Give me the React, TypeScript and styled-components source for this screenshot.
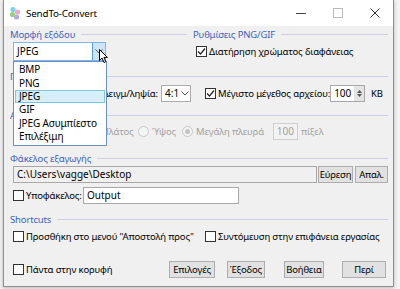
import React from 'react';
import styled, { createGlobalStyle } from 'styled-components';

const GlobalStyle = createGlobalStyle`
  html, body {
    margin: 0;
    padding: 0;
    background: #f4f4f4;
  }
  body {
    font-family: 'Noto Sans', 'DejaVu Sans', sans-serif;
    font-size: 9.5px;
    letter-spacing: -0.15px;
    line-height: 13px;
    color: #000;
  }
`;

const Page = styled.div`
  width: 400px;
  height: 289px;
  overflow: hidden;
  position: relative;
`;

const Window = styled.div`
  margin-left: 3px;
  width: 389px;
  height: 286px;
  border: 1px solid #8e8e8e;
  border-top: none;
  box-shadow: 0 1px 4px rgba(0, 0, 0, 0.25);
  background: #f0f0f0;
  display: flex;
  flex-direction: column;
  position: relative;
`;

const TitleBar = styled.div`
  height: 26px;
  background: #fff;
  display: flex;
  align-items: center;
  padding-left: 5px;
  flex-shrink: 0;
`;

const Title = styled.span`
  font-size: 9.8px;
  margin-left: 5px;
  flex: 1;
`;

const WinButton = styled.div`
  width: 37px;
  height: 26px;
  display: flex;
  align-items: center;
  justify-content: center;
`;

const Body = styled.div`
  padding: 0 5px 0 6px;
  display: flex;
  flex-direction: column;
  position: relative;
`;

const Columns = styled.div`
  display: flex;
  gap: 6px;
`;

const Column = styled.div<{ $w?: number }>`
  display: flex;
  flex-direction: column;
  width: ${p => (p.$w ? `${p.$w}px` : 'auto')};
  flex: ${p => (p.$w ? 'none' : 1)};
`;

const Header = styled.div<{ $top?: number }>`
  height: 14px;
  margin-top: ${p => p.$top ?? 0}px;
  display: flex;
  align-items: center;
  gap: 6px;
  color: #3b63c0;
  white-space: nowrap;
  &::after {
    content: '';
    flex: 1;
    height: 1px;
    background: #cacfe8;
  }
`;

const Row = styled.div<{ $h: number; $top?: number; $pl?: number }>`
  height: ${p => p.$h}px;
  margin-top: ${p => p.$top ?? 0}px;
  padding-left: ${p => p.$pl ?? 0}px;
  display: flex;
  align-items: center;
  white-space: nowrap;
`;

const Cell = styled.div<{ $w: number; $end?: boolean }>`
  width: ${p => p.$w}px;
  flex-shrink: 0;
  display: flex;
  align-items: center;
  justify-content: ${p => (p.$end ? 'flex-end' : 'flex-start')};
`;

const Combo = styled.div<{ $w: number; $ml?: number; $active?: boolean }>`
  width: ${p => p.$w}px;
  height: ${p => (p.$active ? 19 : 17)}px;
  margin-left: ${p => p.$ml ?? 0}px;
  box-sizing: border-box;
  border: 1px solid ${p => (p.$active ? '#7eb4ea' : '#acacac')};
  background: #fff;
  display: flex;
  align-items: center;
  padding-left: 3px;
  flex-shrink: 0;
  font-size: 10px;
  letter-spacing: 0;
`;

const ComboText = styled.span`
  flex: 1;
`;

const DropBtn = styled.div<{ $active?: boolean }>`
  width: 12px;
  align-self: stretch;
  display: flex;
  align-items: center;
  justify-content: center;
  background: ${p => (p.$active ? '#cce4f7' : 'transparent')};
  border-left: 1px solid ${p => (p.$active ? '#569de5' : 'transparent')};
`;

const Box = styled.span`
  width: 11px;
  height: 11px;
  box-sizing: border-box;
  border: 1px solid #333;
  background: #fff;
  display: inline-flex;
  align-items: center;
  justify-content: center;
  margin-right: 2px;
  flex-shrink: 0;
`;

const Radio = styled.span<{ $checked?: boolean }>`
  width: 11px;
  height: 11px;
  box-sizing: border-box;
  border: 1px solid #c8c8c8;
  border-radius: 50%;
  background: #f4f4f4;
  display: inline-flex;
  align-items: center;
  justify-content: center;
  margin-right: 3px;
  flex-shrink: 0;
  &::after {
    content: '';
    display: ${p => (p.$checked ? 'block' : 'none')};
    width: 5px;
    height: 5px;
    border-radius: 50%;
    background: #c4c4c4;
  }
`;

const Label = styled.span<{ $ml?: number; $muted?: boolean }>`
  margin-left: ${p => p.$ml ?? 0}px;
  color: ${p => (p.$muted ? '#a2a2a2' : '#000')};
  flex-shrink: 0;
`;

const TextBox = styled.div<{ $w: number; $ml?: number; $grey?: boolean; $muted?: boolean }>`
  width: ${p => p.$w}px;
  height: 17px;
  margin-left: ${p => p.$ml ?? 0}px;
  box-sizing: border-box;
  border: 1px solid ${p => (p.$muted ? '#d0d0d0' : '#a8a8a8')};
  background: ${p => (p.$grey ? '#f0f0f0' : p.$muted ? '#f2f2f2' : '#fff')};
  color: ${p => (p.$muted ? '#a2a2a2' : '#000')};
  display: flex;
  align-items: center;
  padding: 0 3px;
  justify-content: ${p => (p.$muted ? 'flex-end' : 'flex-start')};
  flex-shrink: 0;
  font-size: 10px;
  letter-spacing: 0;
`;

const Spin = styled.div`
  width: 35px;
  height: 17px;
  box-sizing: border-box;
  border: 1px solid #a8a8a8;
  background: #fff;
  display: flex;
  align-items: center;
  flex-shrink: 0;
  font-size: 10px;
`;

const SpinValue = styled.span`
  flex: 1;
  text-align: right;
  padding-right: 3px;
`;

const SpinArrows = styled.div`
  width: 10px;
  align-self: stretch;
  background: #e4e4e4;
  display: flex;
  flex-direction: column;
  align-items: center;
  justify-content: center;
  gap: 1px;
`;

const Button = styled.div<{ $w: number; $ml?: number }>`
  width: ${p => p.$w}px;
  height: 17px;
  margin-left: ${p => p.$ml ?? 0}px;
  box-sizing: border-box;
  border: 1px solid #adadad;
  background: #e1e1e1;
  display: flex;
  align-items: center;
  justify-content: center;
  flex-shrink: 0;
`;

const Spacer = styled.div`
  flex: 1;
`;

const DropList = styled.div`
  position: absolute;
  left: 9px;
  top: 61px;
  width: 94px;
  box-sizing: border-box;
  border: 1px solid #6f8fbf;
  background: #fff;
  padding: 1px 0 2px;
  z-index: 5;
  white-space: nowrap;
  font-size: 10px;
`;

const DropItem = styled.div<{ $selected?: boolean }>`
  height: 13.4px;
  display: flex;
  align-items: center;
  padding-left: 3px;
  margin: 0 1px;
  box-sizing: border-box;
  background: ${p => (p.$selected ? '#d6eef7' : 'transparent')};
  border: 1px solid ${p => (p.$selected ? '#7fc4e2' : 'transparent')};
`;

const Cursor = styled.svg`
  position: absolute;
  left: 95px;
  top: 49px;
  z-index: 6;
`;

const Check = () => (
  <svg width="9" height="9" viewBox="0 0 9 9">
    <path d="M1 4.5 L3.5 7 L8 1.5" fill="none" stroke="#222" strokeWidth="1.2" />
  </svg>
);

const Chevron = () => (
  <svg width="8" height="5" viewBox="0 0 8 5">
    <path d="M0.5 0.5 L4 4 L7.5 0.5" fill="none" stroke="#555" strokeWidth="1" />
  </svg>
);

const Logo = () => (
  <svg width="12" height="14" viewBox="0 0 12 14">
    <circle cx="4" cy="3.5" r="2.6" fill="#7ed1e8" />
    <circle cx="8.5" cy="6" r="2.6" fill="#f2a9c9" />
    <circle cx="3.5" cy="8.5" r="2.6" fill="#9ad27a" />
    <circle cx="7.5" cy="11" r="2.6" fill="#b7a8e6" />
  </svg>
);

const formats = ['BMP', 'PNG', 'JPEG', 'GIF', 'JPEG Ασυμπίεστο', 'Επιλέξιμη'];

const App: React.FC = () => {
  return (
    <Page>
      <GlobalStyle />
      <Window>
        <TitleBar>
          <Logo />
          <Title>SendTo-Convert</Title>
          <WinButton>
            <svg width="10" height="10" viewBox="0 0 10 10"><path d="M0 5.5 H10" stroke="#444" /></svg>
          </WinButton>
          <WinButton>
            <svg width="10" height="10" viewBox="0 0 10 10"><rect x="0.5" y="0.5" width="9" height="9" fill="none" stroke="#bbb" /></svg>
          </WinButton>
          <WinButton>
            <svg width="10" height="10" viewBox="0 0 10 10"><path d="M0.5 0.5 L9.5 9.5 M9.5 0.5 L0.5 9.5" stroke="#333" /></svg>
          </WinButton>
        </TitleBar>
        <Body>
          <Columns>
            <Column $w={177}>
              <Header $top={1}>Μορφή εξόδου</Header>
              <Row $h={20} $pl={3}>
                <Combo $w={93} $active>
                  <ComboText>JPEG</ComboText>
                  <DropBtn $active><Chevron /></DropBtn>
                </Combo>
              </Row>
            </Column>
            <Column>
              <Header $top={1}>Ρυθμίσεις PNG/GIF</Header>
              <Row $h={20} $pl={3}>
                <Box><Check /></Box>
                <Label>Διατήρηση χρώματος διαφάνειας</Label>
              </Row>
            </Column>
          </Columns>

          <Header $top={8}>Ποιότητα</Header>
          <Row $h={18} $top={1}>
            <Cell $w={148} $end>Υπο-Δειγμ/ληψία:</Cell>
            <Combo $w={30} $ml={3}>
              <ComboText>4:1</ComboText>
              <DropBtn><Chevron /></DropBtn>
            </Combo>
            <Cell $w={125} style={{ marginLeft: 14 }}>
              <Box><Check /></Box>
              <Label>Μέγιστο μέγεθος αρχείου:</Label>
            </Cell>
            <Spin>
              <SpinValue>100</SpinValue>
              <SpinArrows>
                <svg width="5" height="3" viewBox="0 0 5 3"><path d="M0 3 L2.5 0 L5 3 Z" fill="#555" /></svg>
                <svg width="5" height="3" viewBox="0 0 5 3"><path d="M0 0 L2.5 3 L5 0 Z" fill="#555" /></svg>
              </SpinArrows>
            </Spin>
            <Label $ml={6}>KB</Label>
          </Row>

          <Header $top={6}>Αλλαγή μεγέθους</Header>
          <Row $h={16} $top={1} $pl={3}>
            <Cell $w={75}>
              <Radio />
              <Label $muted>Ποσοστό</Label>
            </Cell>
            <Cell $w={50}>
              <Radio />
              <Label $muted>Πλάτος</Label>
            </Cell>
            <Cell $w={44}>
              <Radio />
              <Label $muted>Ύψος</Label>
            </Cell>
            <Cell $w={91}>
              <Radio $checked />
              <Label $muted>Μεγάλη πλευρά</Label>
            </Cell>
            <TextBox $w={25} $muted>100</TextBox>
            <Label $ml={3} $muted>πίξελ</Label>
          </Row>

          <Header $top={12}>Φάκελος εξαγωγής</Header>
          <Row $h={17} $top={1} $pl={3}>
            <TextBox $w={304} $grey>C:\Users\vagge\Desktop</TextBox>
            <Button $w={35} $ml={1}>Εύρεση</Button>
            <Button $w={33} $ml={2}>Απαλ.</Button>
          </Row>
          <Row $h={18} $top={3} $pl={3}>
            <Cell $w={70}>
              <Box />
              <Label>Υποφάκελος:</Label>
            </Cell>
            <TextBox $w={156}>Output</TextBox>
          </Row>

          <Header $top={8}>Shortcuts</Header>
          <Row $h={16} $top={2} $pl={3}>
            <Cell $w={192}>
              <Box />
              <Label>Προσθήκη στο μενού "Αποστολή προς"</Label>
            </Cell>
            <Box />
            <Label>Συντόμευση στην επιφάνεια εργασίας</Label>
          </Row>

          <Row $h={18} $top={16} $pl={3}>
            <Box />
            <Label>Πάντα στην κορυφή</Label>
            <Spacer />
            <Button $w={46}>Επιλογές</Button>
            <Button $w={38} $ml={12}>Έξοδος</Button>
            <Button $w={40} $ml={19}>Βοήθεια</Button>
            <Button $w={44} $ml={18}>Περί</Button>
            <Spacer style={{ flex: 'none', width: 2 }} />
          </Row>
        </Body>

        <DropList>
          {formats.map(f => (
            <DropItem key={f} $selected={f === 'JPEG'}>{f}</DropItem>
          ))}
        </DropList>
        <Cursor width="10" height="15" viewBox="0 0 10 15">
          <path d="M0.5 0.5 L0.5 11.5 L3 9 L5 13.5 L6.8 12.7 L4.9 8.4 L8.5 8.4 Z" fill="#fff" stroke="#000" strokeWidth="1" />
        </Cursor>
      </Window>
    </Page>
  );
};

export default App;
